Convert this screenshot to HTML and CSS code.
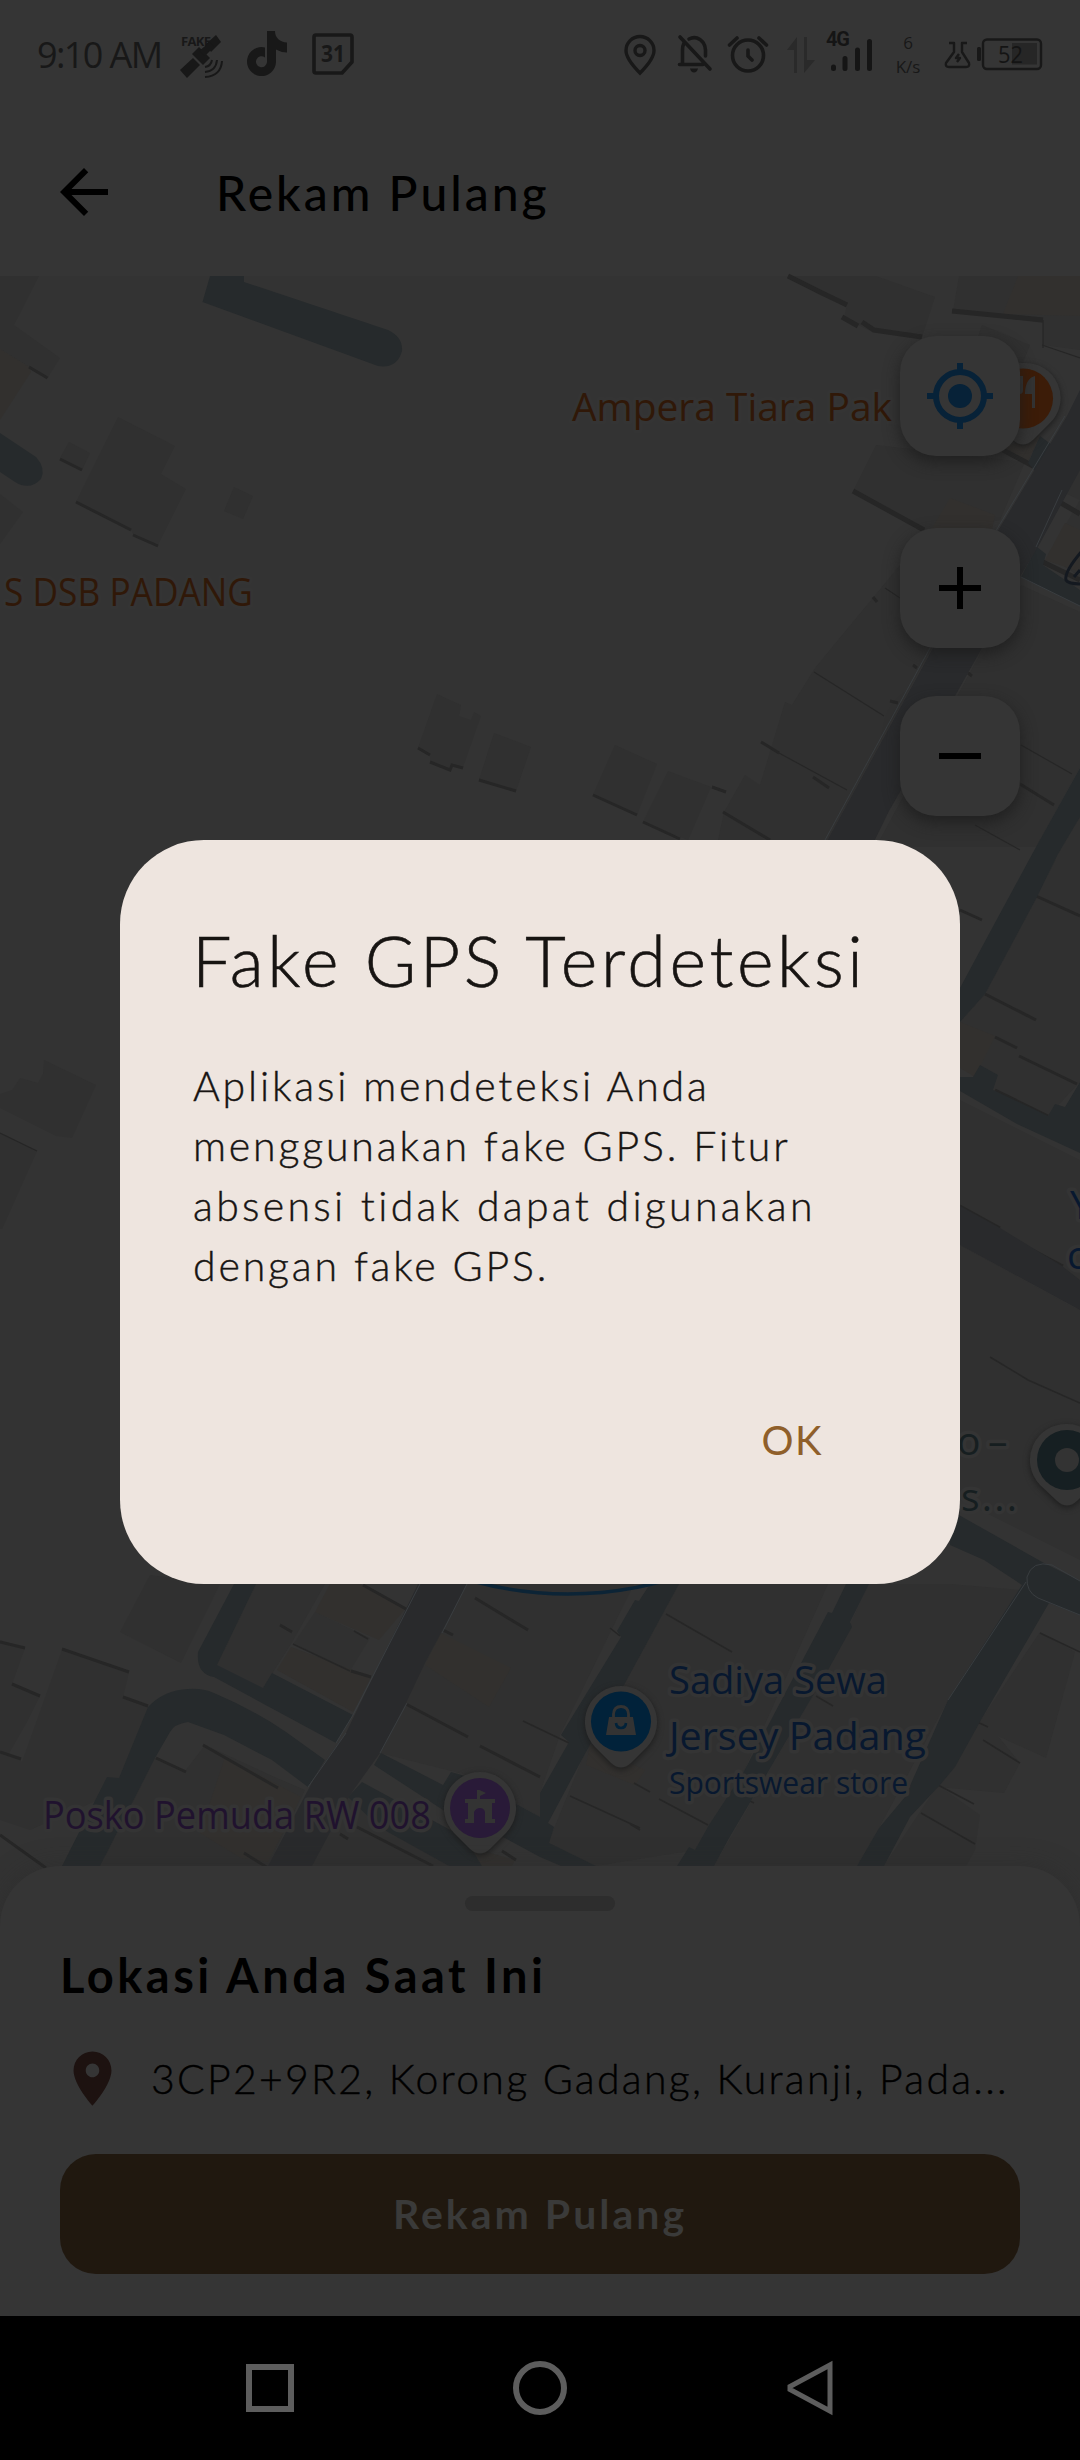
FILE: index.html
```html
<!DOCTYPE html>
<html lang="id">
<head>
<meta charset="utf-8">
<title>Rekam Pulang</title>
<link rel="stylesheet" href="styles.css">
</head>
<body>
<div class="screen">
  <header class="status">
    <span class="clock">9:10 AM</span>
    <svg class="fake" width="46" height="48" viewBox="178 30 46 48">
      <text x="181" y="46" class="tiny-bold" textLength="30">FAKE</text>
      <g fill="#181818">
        <path d="M206 44L216 35L221 42L211 52Z"/><path d="M192 54L199 47L210 58L203 65Z"/><path d="M180 70L193 58L200 65L187 78Z"/><path d="M199 51L210 42L214 47L205 56Z"/>
      </g>
      <g fill="none" stroke="#181818" stroke-width="2"><path d="M205 67Q211 66 212 60"/><path d="M205 72Q216 71 217 60"/><path d="M205 77Q221 76 222 61"/></g>
    </svg>
    <svg class="tiktok" width="40" height="46" viewBox="247 31 40 46">
      <path fill="#181818" d="M267 31H275C275 38 280 42 287 42.500V52.500Q281 52.500 276 49.500V62A14.500 14.500 0 1 1 265 47.500V57.500A5.500 5.500 0 1 0 267 62Z"/>
    </svg>
    <svg class="cal" width="42" height="44" viewBox="312 32 42 44">
      <path fill="none" stroke="#181818" stroke-width="3.600" stroke-linejoin="round" d="M316 35H350Q352 35 352 37V62L342 73H316Q314 73 314 71V37Q314 35 316 35Z"/>
      <text x="321" y="62" class="cal-num" textLength="24" lengthAdjust="spacingAndGlyphs">31</text>
    </svg>
    <div class="status-right">
      <svg width="32" height="42" viewBox="624 34 32 42"><g fill="none" stroke="#181818" stroke-width="3.400"><path d="M640 73Q626 59 626 50.500A14 14 0 0 1 654 50.500Q654 59 640 73Z"/><circle cx="640" cy="50.500" r="5"/></g></svg>
      <svg class="bell" width="38" height="42" viewBox="677 34 38 42"><g fill="none" stroke="#181818" stroke-width="3.600" stroke-linecap="round"><path d="M680 37L710 69M679.500 64.500H703M682.500 64V50Q682.500 46 684 43M689 39Q693 37 697 38Q705 41 705.500 50V56"/></g><path fill="#181818" d="M690 68.500H698Q697 72.500 694 72.500T690 68.500Z"/></svg>
      <svg class="alarm" width="42" height="42" viewBox="727 34 42 42"><g fill="none" stroke="#181818" stroke-width="3.600" stroke-linecap="round"><circle cx="748" cy="55.500" r="15.500"/><path d="M748 50V56L752 60M729.500 45L737 38M766.500 45L759 38"/></g></svg>
      <svg class="updown" width="30" height="42" viewBox="786 34 30 42"><path fill="#2a2a2a" d="M794 73V50H787L797 37V73ZM804 37H807V60H815L804 73Z"/></svg>
      <svg class="signal" width="50" height="46" viewBox="825 30 50 46">
        <text x="826" y="46" class="net" textLength="24">4G</text>
        <path stroke="#151515" stroke-width="5" stroke-linecap="round" d="M833.500 67V68.500M845 58.500V68.500M857.500 50V68.500M869.500 41.500V68.500"/>
      </svg>
      <div class="speed"><span>6</span><span>K/s</span></div>
      <svg class="battery" width="102" height="40" viewBox="943 34 102 40">
        <g fill="none" stroke="#181818" stroke-width="2.400" stroke-linejoin="round"><path d="M949 43H954V52L946 63Q945 67 949 67H966Q970 67 969 63L962 52V43H967"/><path d="M959 54L956 58H960L957 62"/><rect x="983" y="39.500" width="58" height="29.500" rx="4"/></g>
        <rect x="977" y="47" width="4" height="14" rx="1.500" fill="#181818"/><rect x="1012" y="43" width="25" height="21.500" fill="#262626"/>
        <text x="998" y="62.500" class="pct" textLength="25" lengthAdjust="spacingAndGlyphs">52</text>
      </svg>
    </div>
  </header>

  <div class="appbar">
    <svg width="72" height="72" viewBox="0 0 24 24"><path d="M20 11H7.830l5.590-5.590L12 4l-8 8 8 8 1.410-1.410L7.830 13H20v-2z"/></svg>
    <h1>Rekam Pulang</h1>
  </div>

  <main class="map">
    <svg class="tiles" width="1080" height="1650" viewBox="0 276 1080 1650">
      <g class="bldg">
        <path d="M0 276H39L14 325L60 358L47.500 378L29 367L0 349Z"/>
        <path d="M69 442L90 453L82 470L60 458Z"/>
        <path d="M118 417L175 446L161 474L186 489L158 545L133 534L131 530L76 502Z"/>
        <path d="M234 487L253 496L243 519L224 511Z"/>
        <path d="M0 494L23 512L0 544Z"/>
        <path d="M437 694L461 705L459 716L471 720L474 712L481 716L463 767L452 765L450 770L430 762V755L418 748Z"/>
        <path d="M494 733L531 747L516 791L479 780Z"/>
        <path d="M44 1060L96 1085L72 1138L56 1136L0 1108V1094L12 1090L20 1078L38 1083L43 1074Z"/>
        <path d="M0 1133L37 1151L2 1229L0 1229Z"/>
        <path d="M788 276H866L876 276L935 297L922 337L872 332L844 318L847 305L820 295Z"/>
        <path d="M959 276H1080V350L1043 345V323L953 311Z"/>
        <path d="M876 445L1025 462L1000 520L930 534L853 491Z"/>
        <path d="M982 325L1030 345L1022 365L975 345Z"/>
        <path d="M900 565L932 600V648L827 840H718L724 812L745 775L760 785L785 702L792 705L815 668L838 640Z"/>
        <path d="M615 745L657 764L637 815L593 795Z"/>
        <path d="M668 771L711 787L688 840L643 822Z"/>
        <path d="M1021 585L1080 612V767L1036 847H876L982 650Z"/>
        <path d="M1058 490L1080 470V577L1048 555L1080 500Z"/>
        <path d="M1080 817L1058 854L1037 897L985 994L960 1022V1062L993 1090L1048 1116L1080 1082Z"/>
        <path d="M960 1100L1080 1160V1310L960 1206Z"/>
        <path d="M960 1245L1075 1308L1080 1310V1560L960 1500Z"/>
        <path d="M62 1650L129 1672L123 1697L148 1707L119 1778L107 1777L98 1800L30 1830L0 1820V1640L25 1648L12 1684L40 1696L28 1720L8 1755L22 1762Z"/>
        <path d="M150 1575L220 1584L181 1663L120 1632Z"/>
        <path d="M256 1584H325L291 1644L263 1688L217 1665Z"/>
        <path d="M315 1612L370 1638L350 1671L294 1643Z"/>
        <path d="M467 1584H634L560 1735L540 1793V1817L467 1775L380 1753L425 1663Z"/>
        <path d="M679 1584H828L743 1773L695 1850L596 1866L548 1843L586 1750L624 1685Z"/>
        <path d="M869 1584H950L1022 1590L948 1700L879 1828L857 1866H714L828 1670Z"/>
        <path d="M1040 1632L1075 1652L1046 1758L998 1736L1020 1763L1004 1793L938 1787L981 1720Z"/>
        <path d="M938 1785L980 1815L975 1850L966 1866H884Z"/>
        <path d="M205 1745L270 1775L305 1790L268 1866H100L155 1758L186 1770Z"/>
        <path d="M349 1797L380 1827L449 1866H311Z"/>
      </g>
      <g class="tan">
        <path d="M0 349L29 367L31 372L0 420Z"/>
        <path d="M1018 276H1080V316L1003 314Z"/>
        <path d="M950 498L995 515L990 540H925Z"/>
        <path d="M1004 447L1040 435L1028 462Z"/>
        <path d="M1065 523L1080 530V572L1045 560Z"/>
        <path d="M960 1022L995 1036L975 1077L960 1068Z"/>
        <path d="M330 1584H360L406 1608L379 1640L315 1612Z"/>
        <path d="M291 1647L371 1677L353 1712L277 1670Z"/>
        <path d="M441 1633L511 1668L489 1707L425 1665Z"/>
        <path d="M225 1757L301 1797L268 1862L241 1858L200 1833Z"/>
        <path d="M590 1745L645 1770L635 1785L586 1765Z"/>
        <path d="M465 1846L515 1860L512 1866H460Z"/>
      </g>
      <g class="edge">
        <path d="M29 367L47.500 378M60 459L82 470M76 502L131 530M133 535L158 546M418 748L430 755M430 762L450 770L452 765L463 768M479 780L516 791"/>
        <path stroke-width="5" d="M788 276L820 292L847 305M842 317L858 326M862 322L874 330L922 337M952 311L1043 320M853 491L924 530M1003 450L1033 466M1061 503L1080 514M1043 562L1080 580"/>
        <path d="M593 795L637 815M643 822L680 839M723 812L770 840M761 742L779 753M813 777L829 788M712 787L726 792M873 597L877 602M913 665L917 668M890 701L898 703M968 673L972 676M1020 784L1054 805"/>
        <path stroke-width="1.200" d="M779 753L847 790M814 672L884 716M885 588L900 598M1021 745L1072 774M1043 320V348M1042 345L1080 358M975 825L1020 850M0 1133L37 1151"/>
        <path d="M1036 896L1080 916M985 994L1036 1020M995 1037L1017 1048M1019 1056L1077 1084M995 1090L1048 1116M960 1206L1000 1228M998 1232L1063 1266M960 910L982 920"/>
        <path stroke-width="1.500" d="M990 1357L1028 1380L1080 1403M293 1644L350 1671M354 1631L368 1639M523 1721L569 1743"/>
        <path d="M0 1642L25 1648M12 1684L40 1696M62 1649L129 1672M123 1697L148 1706M0 1752L21 1759M156 1758L186 1772M203 1745L278 1788M0 1835L46 1868M363 1585L406 1609M351 1671L371 1677M280 1625L292 1632M475 1598L528 1630M406 1704L468 1737M480 1746L540 1777M443 1630L453 1635M244 1853L268 1868M340 1834L348 1839M357 1827L433 1866M502 1851L516 1860"/>
        <path stroke-width="1.500" d="M666 1614L732 1652M570 1796L640 1828M659 1799L708 1825M816 1696L833 1706M634 1783L650 1792M630 1824L640 1830M748 1800L754 1803M938 1785L974 1804M921 1813L975 1844M983 1740L1020 1763M1040 1633L1080 1652M973 1720L988 1727M610 1628L620 1636"/>
      </g>
      <g class="road">
        <path d="M210 276H244V282L388 330Q403 337 402 351Q397 369 378 366L202.500 302Z"/>
        <path d="M0 433L36 457Q46 468 41 479Q30 491 15 482L0 472Z"/>
        <path d="M1037 547L1046 554L1043 565L1080 590V606L1021 577Z"/>
        <path d="M1040 436L1052 445L1036 472L1028 463Z"/>
        <path d="M1080 768L1036 847L990 932L960 988V1022L985 994L1037 897L1058 854L1080 817Z"/>
        <path d="M960 1077H973L980 1065L998 1075L993 1090L1048 1116L1055 1104L1065 1107L1080 1082V1153L1017 1124L960 1091Z"/>
        <path d="M950 1510L1044 1563L1080 1581V1615L1049 1603L981 1720L955 1767L940 1785L910 1817L884 1866H857L879 1828L905 1797L948 1700L1022 1585L984 1560L950 1545Z"/>
        <path d="M846 1584H869L850 1622L852 1627L828 1670L728 1840L714 1866H677L689 1847L695 1850L709 1825L743 1773L828 1612L832 1613Z"/>
        <path d="M650 1584H679L624 1685L587 1750L548 1823L554 1827L549 1843L596 1866H561L540 1857L505 1838L443 1810L374 1765L381 1753L443 1785L451 1772L465 1776L540 1817V1793L569 1742L561 1735L621 1637L617 1631L635 1600L639 1601Z"/>
        <path d="M362 1782L465 1838L482 1866H449L379 1827L348 1797Z"/>
        <path d="M234 1584H256L217 1665L263 1688L272 1673L353 1715L336 1743L214 1677Q196 1674 198 1652Z"/>
        <path d="M62 1866L107 1777L119 1778L148 1707Q164 1690 188 1689Q202 1688 214 1693Q254 1710 286 1732L325 1760L308 1787L272 1760L224 1735L188 1722Q174 1724 170 1732L155 1758L100 1866Z"/>
      </g>
      <g class="main-road">
        <path d="M1080 390V470L1038 547L1021 575L982 648L955 696L889 811L870 850H822L933 648L999 529L1067 416Z"/>
        <path d="M960 1206L1000 1228L1062 1266L1080 1280V1310L960 1245Z"/>
        <path d="M418 1584H467L425 1663L406 1703L380 1753L350 1795L312 1866H268L317 1773L346 1733Z"/>
      </g>
      <g class="kerb">
        <path d="M1065 416L997 529L930 648L825 840M1062 490L1036 547M420 1584L353 1715L336 1743M467 1584L442 1633M1026 1582L948 1700M407 1703L380 1753M346 1733L308 1787M1080 1581L1052 1565Q1032 1560 1027 1577Q1026 1592 1038 1598L1080 1615M1021 577L1080 606"/>
      </g>
      <circle cx="568" cy="1236" r="358" fill="none" stroke="#0c2436" stroke-width="3.500"/>

      <g class="pin-shell">
        <path d="M1023 363A35 35 0 0 1 1049 424L1033 440Q1023 449 1013 440L996 424A35 35 0 0 1 1023 363Z"/>
        <path d="M1067 1424A36 36 0 0 1 1093 1485L1077 1501Q1067 1510 1057 1501L1040 1485A36 36 0 0 1 1067 1424Z"/>
        <path d="M621 1686A36 36 0 0 1 647 1747L631 1763Q621 1772 611 1763L595 1747A36 36 0 0 1 621 1686Z"/>
        <path d="M480 1772A36 36 0 0 1 506 1833L490 1849Q480 1858 470 1849L454 1833A36 36 0 0 1 480 1772Z"/>
      </g>
      <circle cx="1023" cy="398.500" r="30" fill="#3c1c08"/>
      <path fill="#333" d="M1020 376H1023V390Q1023 394 1020 394ZM1025 392Q1026 378 1035 376V408H1032V394H1025Z"/>
      <circle cx="1067" cy="1460" r="30" fill="#161f22"/><circle cx="1067" cy="1460" r="12" fill="#333"/>
      <circle cx="621" cy="1721.500" r="30" fill="#01223a"/>
      <path fill="#333" d="M609 1717H633L636 1735H606Z"/><path fill="none" stroke="#333" stroke-width="2.800" d="M613.500 1718V1714Q614 1706.500 621 1706.500T628.500 1714V1718"/><path fill="none" stroke="#01223a" stroke-width="2.600" d="M616 1723Q616.500 1728 621 1728T626 1723"/>
      <circle cx="480" cy="1808" r="30" fill="#291a38"/>
      <path fill="#333" d="M477 1790H479.500L486 1793L480 1796V1799H495V1803H492V1819H495V1823H485V1812Q484 1808 480 1808T474 1812V1823H465V1819H468V1803H465V1799H477Z"/>

      <g class="label food">
        <text x="4" y="605.500" textLength="249" lengthAdjust="spacingAndGlyphs">S DSB PADANG</text>
        <text x="572" y="420.500" textLength="320">Ampera Tiara Pak</text>
      </g>
      <g class="label shop">
        <text x="669" y="1694" textLength="218" lengthAdjust="spacingAndGlyphs">Sadiya Sewa</text>
        <text x="669" y="1750" textLength="257" lengthAdjust="spacingAndGlyphs">Jersey Padang</text>
        <text x="669" y="1794" textLength="239" lengthAdjust="spacingAndGlyphs" class="sub">Sportswear store</text>
        <text x="1070" y="1219">Y</text>
        <text x="1067" y="1269">c</text>
      </g>
      <g class="label civic"><text x="43" y="1829" textLength="388" lengthAdjust="spacingAndGlyphs">Posko Pemuda RW 008</text></g>
      <g class="label place">
        <text x="957" y="1455">o</text><text x="988" y="1455">–</text>
        <text x="961" y="1511" textLength="56">s...</text>
      </g>
      <g fill="none" stroke="#141920" stroke-width="3"><path d="M1082 551Q1064 572 1066 580Q1068 584 1082 584"/><path d="M1074 577L1080 570"/></g>
    </svg>
    <nav class="controls">
      <button class="ctl"><svg width="72" height="72" viewBox="0 0 24 24" fill="none" stroke="#072238" stroke-width="2"><circle cx="12" cy="12" r="8"/><circle cx="12" cy="12" r="4" fill="#072238" stroke="none"/><path d="M12 1v3M12 20v3M1 12h3M20 12h3"/></svg></button>
      <button class="ctl"><svg width="72" height="72" viewBox="0 0 24 24"><path d="M19 13h-6v6h-2v-6H5v-2h6V5h2v6h6v2z"/></svg></button>
      <button class="ctl"><svg width="72" height="72" viewBox="0 0 24 24"><path d="M19 13H5v-2h14v2z"/></svg></button>
    </nav>
  </main>

  <section class="sheet">
    <div class="handle"></div>
    <h2>Lokasi Anda Saat Ini</h2>
    <div class="address">
      <svg width="65" height="65" viewBox="0 0 24 24"><path fill="#1d1210" d="M12 2C8.130 2 5 5.130 5 9c0 5.250 7 13 7 13s7-7.750 7-13c0-3.870-3.130-7-7-7zm0 9.500c-1.380 0-2.500-1.120-2.500-2.500s1.120-2.500 2.500-2.500 2.500 1.120 2.500 2.500-1.120 2.500-2.500 2.500z"/></svg>
      <span>3CP2+9R2, Korong Gadang, Kuranji, Pada...</span>
    </div>
    <button class="record">Rekam Pulang</button>
  </section>

  <footer class="navbar">
    <svg width="54" height="54" viewBox="0 0 54 54"><rect x="6" y="6" width="42" height="42"/></svg>
    <svg width="54" height="54" viewBox="0 0 54 54"><circle cx="27" cy="27" r="24"/></svg>
    <svg width="54" height="54" viewBox="0 0 54 54"><path stroke-width="5" d="M47 4V50L7 28.500V25.500Z"/></svg>
  </footer>

  <div class="dialog" role="alertdialog">
    <h3>Fake GPS Terdeteksi</h3>
    <p><span class="l1">Aplikasi mendeteksi Anda</span><span class="l2">menggunakan fake GPS. Fitur</span><span class="l3">absensi tidak dapat digunakan</span><span class="l4">dengan fake GPS.</span></p>
    <button class="ok">OK</button>
  </div>
</div>
</body>
</html>
```

FILE: styles.css
```css
* { box-sizing: border-box; margin: 0; padding: 0; }
body { background: #353535; }
button { border: 0; background: none; font: inherit; color: inherit; }
svg { display: block; flex: none; overflow: visible; }

.screen {
  position: relative;
  width: 1080px;
  height: 2460px;
  overflow: hidden;
  display: flex;
  flex-direction: column;
  background: #353535;
  color: #000;
  font-family: Lato, "Open Sans", sans-serif;
  white-space: nowrap;
}

/* Status bar */
.status { display: flex; height: 108px; padding: 30px 35px 0 37px; color: #181818; }
.clock { width: 141px; font: 400 36px/50px "Open Sans", sans-serif; letter-spacing: -1.6px; }
.tiktok { margin: 1px 0 0 23px; }
.cal { margin: 2px 0 0 25px; }
.status-right { display: flex; align-items: flex-start; margin-left: auto; padding-top: 4px; }
.bell { margin-left: 21px; }
.alarm { margin-left: 12px; }
.updown { margin-left: 17px; }
.signal { margin: -4px 0 0 9px; }
.speed { width: 30px; margin-left: 18px; display: flex; flex-direction: column; align-items: center; font: 400 17px/24px "Open Sans", sans-serif; margin-top: -3px; }
.battery { margin-left: 20px; }
.tiny-bold { font: 700 13px "Open Sans", sans-serif; fill: #181818; }
.cal-num { font: 700 24px "Open Sans", sans-serif; fill: #181818; }
.net { font: 700 20px Roboto, sans-serif; fill: #151515; }
.pct { font: 400 24px "Open Sans", sans-serif; fill: #141414; }

/* App bar */
.appbar { display: flex; align-items: center; height: 168px; padding-left: 48px; gap: 96px; }
.appbar h1 { font-size: 48px; font-weight: 500; letter-spacing: 3px; }

/* Map */
.map { position: relative; height: 1650px; background: #333; }
.tiles { position: absolute; inset: 0; }
.bldg { fill: #303030; }
.tan { fill: #32302e; }
.edge { fill: none; stroke: #262626; stroke-width: 3; }
.road { fill: #262a2c; }
.main-road { fill: #292a2c; }
.kerb { fill: none; stroke: #393d40; stroke-width: 1; }
.pin-shell { fill: #353535; filter: drop-shadow(0 2px 3px #1c1c1c); }
.label { font: 500 39px "Open Sans", sans-serif; paint-order: stroke; stroke: #343434; stroke-width: 7px; stroke-linejoin: round; }
.label .sub { font-size: 31px; }
.food { fill: #301808; }
.shop { fill: #08182f; }
.civic { fill: #20122e; }
.place { fill: #161e20; }
.controls { position: relative; display: flex; flex-direction: column; align-items: flex-end; gap: 48px; padding: 60px 60px 0; }
.ctl { display: grid; place-items: center; width: 120px; height: 120px; border-radius: 36px; background: #353535; box-shadow: 0 6px 16px #1c1c1ccc; }
.ctl:first-child { margin-bottom: 24px; }

/* Bottom sheet */
.sheet { position: relative; height: 450px; margin-top: -60px; padding: 30px 60px 42px; border-radius: 60px 60px 0 0; background: #353535; display: flex; flex-direction: column; box-shadow: 0 0 24px #2a2a2a80; }
.handle { width: 150px; height: 15px; border-radius: 8px; background: #2d2d2d; align-self: center; }
.sheet h2 { margin-top: 34px; font-size: 47px; line-height: 60px; font-weight: 700; letter-spacing: 3.5px; }
.address { display: flex; align-items: center; height: 66px; margin-top: 40px; gap: 26px; font-size: 41px; font-weight: 300; letter-spacing: 2.25px; -webkit-text-stroke: .4px; }
.record { width: 960px; height: 120px; margin-top: auto; padding-bottom: 2px; border-radius: 36px; background: #20180f; color: #3a3a39; font-size: 41px; font-weight: 700; letter-spacing: 3px; }

/* System navigation */
.navbar { position: relative; display: flex; align-items: center; height: 144px; padding: 0 243px; justify-content: space-between; background: #000; }
.navbar svg { fill: none; stroke: #5d5d5d; stroke-width: 6; }

/* Dialog */
.dialog { position: absolute; left: 120px; top: 840px; width: 840px; height: 744px; padding: 72px; border-radius: 84px; background: #eee5df; color: #171412; display: flex; flex-direction: column; }
.dialog h3 { font-size: 70px; line-height: 96px; font-weight: 300; letter-spacing: 3.6px; -webkit-text-stroke: .6px; }
.dialog p { margin-top: 48px; padding-left: 1px; font-size: 41px; line-height: 60px; font-weight: 300; letter-spacing: 2.85px; -webkit-text-stroke: .4px; }
.dialog p span { display: block; }
.dialog .l3 { letter-spacing: 3.3px; }
.ok { align-self: flex-end; margin: 114px 65px 0 0; line-height: 60px; font-size: 40px; font-weight: 400; letter-spacing: 1.5px; color: #8f5f2a; }
```
